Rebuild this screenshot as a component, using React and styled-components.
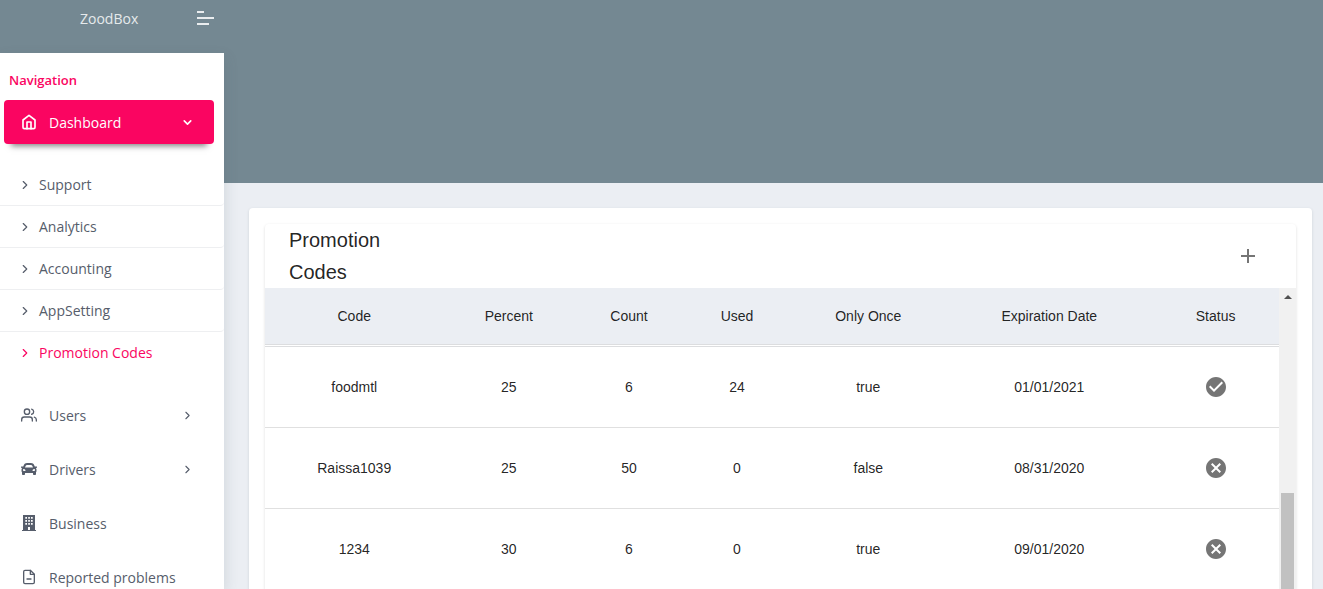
import React from "react";
import styled, { createGlobalStyle } from "styled-components";
import { FiHome, FiUsers, FiFileMinus, FiChevronDown, FiChevronRight } from "react-icons/fi";
import { FaCar } from "react-icons/fa";
import { MdAdd, MdCheckCircle, MdCancel } from "react-icons/md";

const GlobalStyle = createGlobalStyle`
  * { box-sizing: border-box; }
  body { margin: 0; background: #ebeef3; overflow: hidden; }
  button { font: inherit; color: inherit; border: 0; background: none; padding: 0; cursor: pointer; }
  svg { display: block; flex: none; }
`;

const Page = styled.div`
  display: grid;
  grid-template-columns: 224px minmax(0, 1fr);
  height: 100vh;
  overflow: hidden;
  background: linear-gradient(#748892 183px, #ebeef3 183px);
  font-family: "Open Sans", sans-serif;
  font-size: 14px;
`;

const Side = styled.div`
  display: flex;
  flex-direction: column;
  min-height: 0;
`;

const Brand = styled.header`
  display: flex;
  align-items: flex-start;
  justify-content: space-between;
  flex: none;
  height: 53px;
  padding: 9px 10px 0 80px;
  line-height: 20px;
  color: #e6eaec;
`;

const MenuToggle = styled.button`
  display: grid;
  justify-items: start;
  gap: 4px;
  margin-top: 2px;
`;

const Bar = styled.span`
  display: block;
  width: ${(p) => p.$width}px;
  height: 2px;
  background: #fff;
  opacity: 0.85;
`;

const Sidebar = styled.nav`
  flex: 1;
  min-height: 0;
  overflow: hidden;
  background: #fff;
  box-shadow: 2px 4px 12px rgba(69, 90, 100, 0.14);
`;

const Caption = styled.h2`
  margin: 17px 0 10px 9px;
  font-size: 13px;
  font-weight: 600;
  line-height: 20px;
  color: #fa0561;
`;

const NavItem = styled.a`
  display: grid;
  grid-template-columns: 16px 1fr auto;
  align-items: center;
  gap: 12px;
  height: 44px;
  margin: 0 10px 10px 4px;
  padding: 0 20px 0 17px;
  border-radius: 4px;
  text-decoration: none;
  color: ${(p) => (p.$active ? "#fff" : "#565d6b")};
  background: ${(p) => (p.$active ? "#fa0561" : "transparent")};
  box-shadow: ${(p) => (p.$active ? "0 9px 6px -7px rgba(0, 0, 0, 0.5)" : "none")};
`;

const SubList = styled.ul`
  list-style: none;
  margin: 20px 0;
  padding: 0;
`;

const SubItem = styled.li`
  border-bottom: 1px solid #eeeff1;
  border-radius: 0 4px 4px 0;
  &:last-child { border: 0; }
`;

const SubLink = styled.a`
  display: flex;
  align-items: center;
  gap: 7px;
  height: 41px;
  padding-left: 18px;
  text-decoration: none;
  color: ${(p) => (p.$active ? "#fa0561" : "#565d6b")};
`;

const Main = styled.main`
  display: flex;
  min-height: 0;
  padding: 208px 11px 0 25px;
`;

const Card = styled.section`
  flex: 1;
  min-width: 0;
  padding: 16px 16px 0;
  background: #fff;
  border-radius: 4px 4px 0 0;
  box-shadow: 0 1px 3px rgba(69, 90, 100, 0.18);
`;

const Paper = styled.div`
  height: 100%;
  overflow: hidden;
  border-radius: 4px 4px 0 0;
  box-shadow: 0 1px 3px rgba(0, 0, 0, 0.14);
  font-family: "Liberation Sans", Arial, sans-serif;
  color: rgba(0, 0, 0, 0.87);
`;

const Toolbar = styled.div`
  display: flex;
  align-items: center;
  justify-content: space-between;
  height: 64px;
  padding: 0 36px 0 24px;
`;

const Title = styled.h1`
  width: min-content;
  margin: 0;
  font-size: 20px;
  font-weight: 400;
  line-height: 32px;
`;

const AddButton = styled.button`
  color: #757575;
`;

const Scroller = styled.div`
  display: flex;
  align-items: flex-start;
`;

const Table = styled.table`
  flex: 1;
  table-layout: fixed;
  border-collapse: separate;
  border-spacing: 0;
`;

const Col = styled.col`
  width: ${(p) => p.$share}%;
`;

const HeadCell = styled.th`
  height: 59px;
  padding: 0;
  font-size: 14px;
  font-weight: 400;
  text-align: center;
  background: #ebeef3;
  background-clip: padding-box;
  border-bottom: 3px double #dcdddf;
`;

const Cell = styled.td`
  height: 81px;
  padding: 0;
  text-align: center;
  border-bottom: 1px solid #e0e0e0;
  font-size: 14px;
  svg { margin: 0 auto; color: #757575; }
`;

const Track = styled.div`
  flex: none;
  width: 17px;
  padding: 7px 2px 0;
  background: #f1f1f1;
`;

const ArrowUp = styled.div`
  width: 0;
  margin: 0 auto;
  border: 4px solid transparent;
  border-top: 0;
  border-bottom-color: #505050;
`;

const Thumb = styled.div`
  height: 200px;
  margin-top: 194px;
  background: #c1c1c1;
`;

const Building = () => (
  <svg width="16" height="16" viewBox="0 0 16 16" fill="currentColor" aria-hidden="true">
    <path
      fillRule="evenodd"
      d="M2 0h12v15h1v1H1v-1h1zM4.3 2v1.7h1.7V2zM7.2 2v1.7h1.7V2zM10 2v1.7h1.7V2zM4.3 5v1.7h1.7V5zM7.2 5v1.7h1.7V5zM10 5v1.7h1.7V5zM4.3 8v1.7h1.7V8zM7.2 8v1.7h1.7V8zM10 8v1.7h1.7V8zM7 12v3h2v-3z"
    />
  </svg>
);

const subLinks = ["Support", "Analytics", "Accounting", "AppSetting", "Promotion Codes"];

const sections = [
  { label: "Users", icon: <FiUsers size={16} />, expandable: true },
  { label: "Drivers", icon: <FaCar size={16} />, expandable: true },
  { label: "Business", icon: <Building /> },
  { label: "Reported problems", icon: <FiFileMinus size={16} /> },
];

const columns = [
  ["Code", 17.6],
  ["Percent", 12.9],
  ["Count", 10.8],
  ["Used", 10.5],
  ["Only Once", 15.4],
  ["Expiration Date", 20.3],
  ["Status", 12.5],
];

const codes = [
  { cells: ["foodmtl", "25", "6", "24", "true", "01/01/2021"], active: true },
  { cells: ["Raissa1039", "25", "50", "0", "false", "08/31/2020"], active: false },
  { cells: ["1234", "30", "6", "0", "true", "09/01/2020"], active: false },
];

export default function App() {
  return (
    <>
      <GlobalStyle />
      <Page>
        <Side>
          <Brand>
            <span>ZoodBox</span>
            <MenuToggle type="button" aria-label="Toggle menu">
              <Bar $width={7} />
              <Bar $width={17} />
              <Bar $width={12} />
            </MenuToggle>
          </Brand>
          <Sidebar>
            <Caption>Navigation</Caption>
            <NavItem href="#dashboard" $active>
              <FiHome size={16} strokeWidth={2.5} />
              <span>Dashboard</span>
              <FiChevronDown size={13} strokeWidth={3} />
            </NavItem>
            <SubList>
              {subLinks.map((label) => (
                <SubItem key={label}>
                  <SubLink href="#codes" $active={label === "Promotion Codes"}>
                    <FiChevronRight size={14} />
                    {label}
                  </SubLink>
                </SubItem>
              ))}
            </SubList>
            {sections.map(({ label, icon, expandable }) => (
              <NavItem key={label} href="#section">
                {icon}
                <span>{label}</span>
                {expandable && <FiChevronRight size={13} />}
              </NavItem>
            ))}
          </Sidebar>
        </Side>
        <Main>
          <Card>
            <Paper>
              <Toolbar>
                <Title>Promotion Codes</Title>
                <AddButton type="button" aria-label="Add promotion code">
                  <MdAdd size={24} />
                </AddButton>
              </Toolbar>
              <Scroller>
                <Table>
                  <colgroup>
                    {columns.map(([name, share]) => (
                      <Col key={name} $share={share} />
                    ))}
                  </colgroup>
                  <thead>
                    <tr>
                      {columns.map(([name]) => (
                        <HeadCell key={name} scope="col">{name}</HeadCell>
                      ))}
                    </tr>
                  </thead>
                  <tbody>
                    {codes.map(({ cells, active }) => (
                      <tr key={cells[0]}>
                        {cells.map((text, i) => (
                          <Cell key={i}>{text}</Cell>
                        ))}
                        <Cell>
                          {active ? (
                            <MdCheckCircle size={24} title="Active" />
                          ) : (
                            <MdCancel size={24} title="Inactive" />
                          )}
                        </Cell>
                      </tr>
                    ))}
                  </tbody>
                </Table>
                <Track aria-hidden="true">
                  <ArrowUp />
                  <Thumb />
                </Track>
              </Scroller>
            </Paper>
          </Card>
        </Main>
      </Page>
    </>
  );
}
